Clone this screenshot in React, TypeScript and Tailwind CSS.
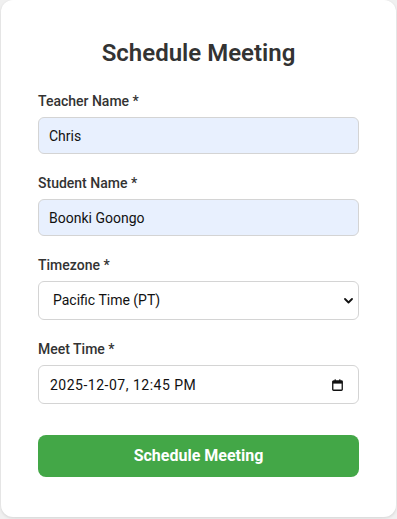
import React from "react";

const Label = ({ children }: { children: React.ReactNode }) => (
  <label className="block text-[14px] leading-[20px] font-medium text-[#333] mb-[6px]">
    {children}
  </label>
);

const CalendarIcon = () => (
  <svg width="11" height="12" viewBox="0 0 11 12" fill="none">
    <rect x="0.75" y="2" width="9.5" height="9.25" rx="0.8" stroke="#111" strokeWidth="1.3" />
    <rect x="0.75" y="2" width="9.5" height="2.6" fill="#111" />
    <rect x="2.6" y="0.3" width="1.2" height="2" fill="#111" />
    <rect x="7.2" y="0.3" width="1.2" height="2" fill="#111" />
  </svg>
);

const Chevron = () => (
  <svg width="9" height="6" viewBox="0 0 9 6" fill="none">
    <path d="M1 1l3.5 3.5L8 1" stroke="#111" strokeWidth="1.8" strokeLinecap="round" strokeLinejoin="round" />
  </svg>
);

const App = () => {
  return (
    <div
      className="w-[397px] h-[519px] bg-[#f0f0f0] px-[1px] pb-[2px] overflow-hidden"
      style={{ fontFamily: "Roboto, 'Liberation Sans', sans-serif" }}
    >
      <div className="h-[517px] bg-white rounded-[12px] shadow-[0_1px_3px_rgba(0,0,0,0.12)] px-[37px] pt-[39px]">
        <h1 className="text-center text-[24px] leading-[28px] font-semibold text-[#333] mb-[24px]">
          Schedule Meeting
        </h1>

        <form className="flex flex-col gap-[19px]" onSubmit={(e) => e.preventDefault()}>
          <div>
            <Label>Teacher Name *</Label>
            <input
              readOnly
              value="Chris"
              className="w-full h-[37px] px-[10px] rounded-[6px] border border-[#d4d4d4] bg-[#e8f0fe] text-[14px] text-[#111] outline-none"
            />
          </div>

          <div>
            <Label>Student Name *</Label>
            <input
              readOnly
              value="Boonki Goongo"
              className="w-full h-[37px] px-[10px] rounded-[6px] border border-[#d4d4d4] bg-[#e8f0fe] text-[14px] text-[#111] outline-none"
            />
          </div>

          <div>
            <Label>Timezone *</Label>
            <div className="relative">
              <select
                defaultValue="PT"
                className="w-full h-[39px] pl-[14px] pr-[30px] rounded-[6px] border border-[#d4d4d4] bg-white text-[14px] text-[#111] outline-none appearance-none"
              >
                <option value="PT">Pacific Time (PT)</option>
                <option value="MT">Mountain Time (MT)</option>
                <option value="CT">Central Time (CT)</option>
                <option value="ET">Eastern Time (ET)</option>
              </select>
              <span className="pointer-events-none absolute right-[6px] top-[17px]">
                <Chevron />
              </span>
            </div>
          </div>

          <div>
            <Label>Meet Time *</Label>
            <div className="relative">
              <input
                readOnly
                value="2025-12-07, 12:45 PM"
                className="w-full h-[39px] pl-[11px] pr-[30px] rounded-[6px] border border-[#d4d4d4] bg-white text-[14px] tracking-[0.5px] text-[#111] outline-none"
              />
              <span className="pointer-events-none absolute right-[16px] top-[14px]">
                <CalendarIcon />
              </span>
            </div>
          </div>

          <button
            type="submit"
            className="mt-[12px] w-full h-[42px] rounded-[8px] bg-[#43a747] text-white text-[16px] font-bold"
          >
            Schedule Meeting
          </button>
        </form>
      </div>
    </div>
  );
};

export default App;
